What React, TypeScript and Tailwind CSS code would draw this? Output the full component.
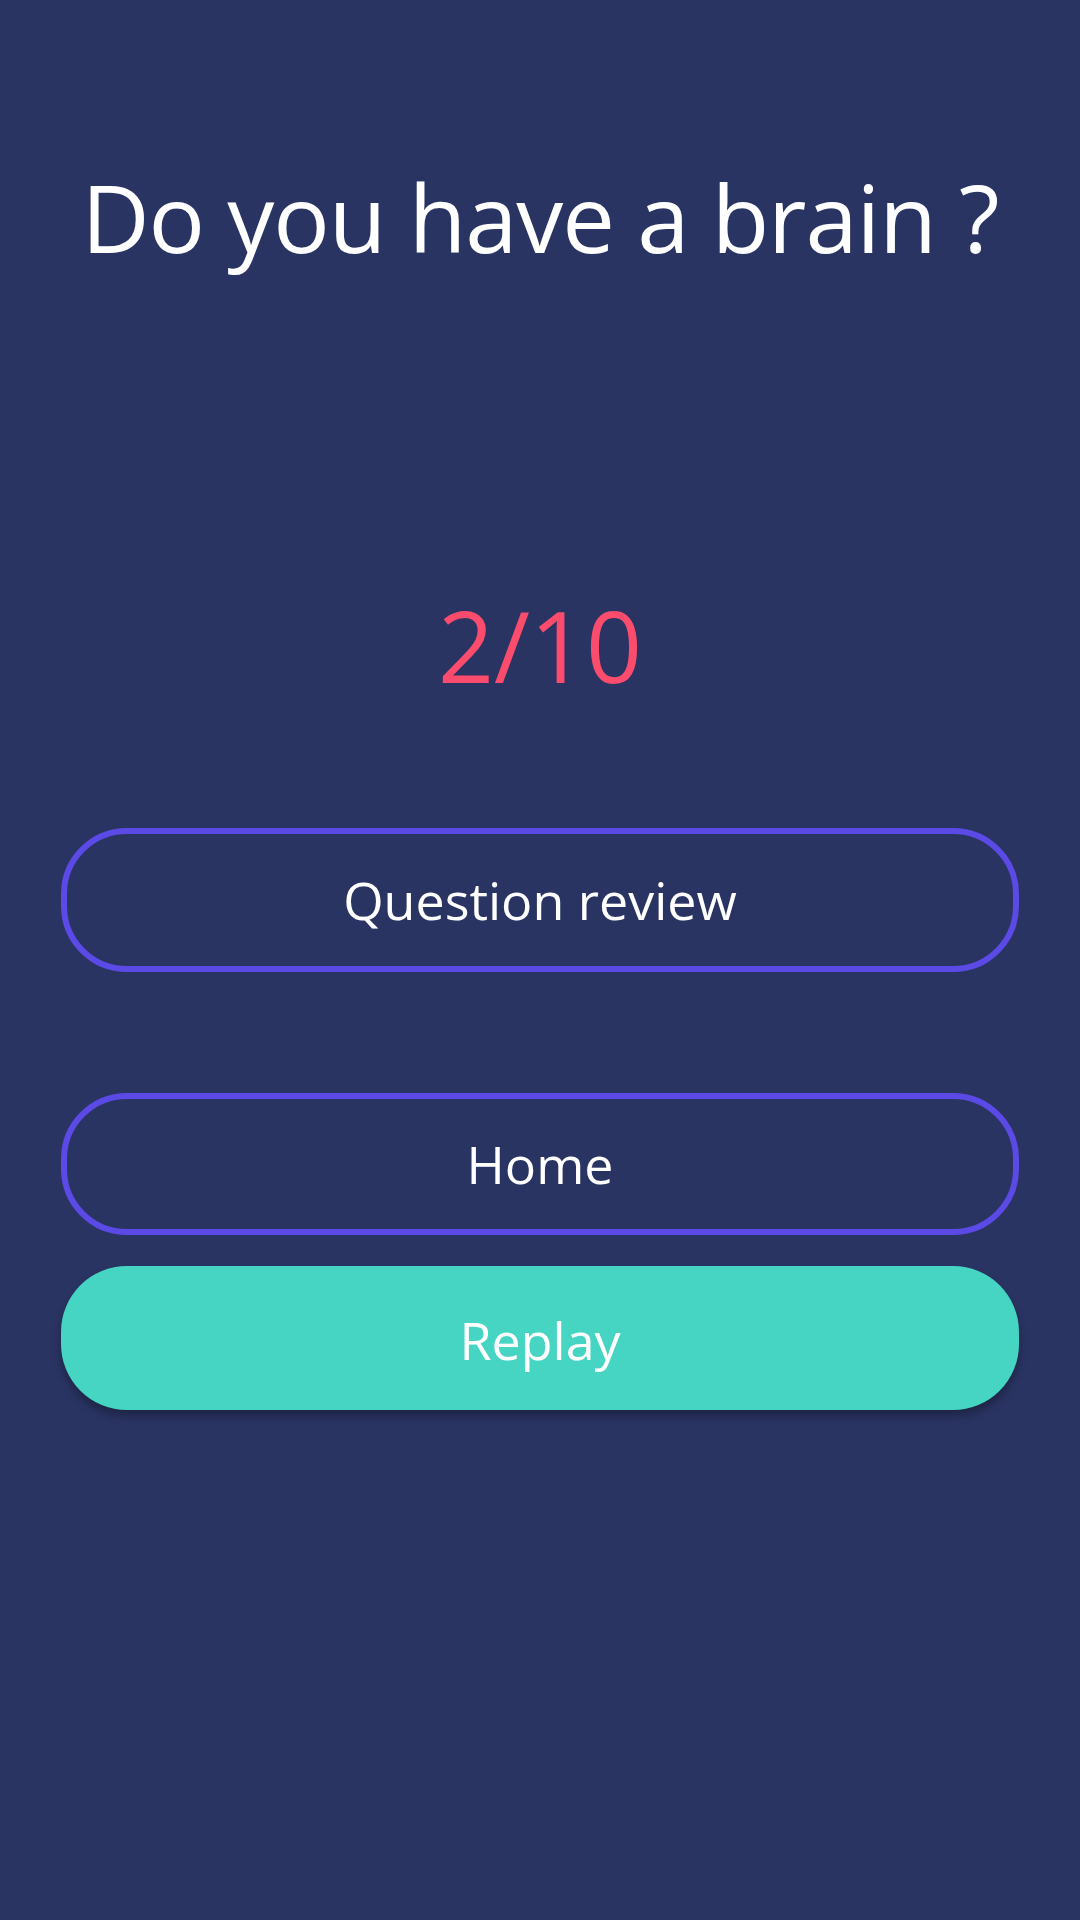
export default function App() {
  return (
    <div className="min-h-[1920px] w-full bg-[#2a3463] flex flex-col items-center px-[61px] font-['Open_Sans',sans-serif] text-white">
      <h1 className="mt-[170px] text-[94px] leading-none font-normal tracking-[-1.1px] whitespace-nowrap">Do you have a brain ?</h1>
      <div className="mt-[332px] text-[98px] leading-none text-[#fc4c6e]">2/10</div>
      <button className="mt-[134px] w-full h-[144px] rounded-[66px] border-[6px] border-[#5b4ae6] text-[52px] leading-none">
        Question review
      </button>
      <button className="mt-[121px] w-full h-[142px] rounded-[66px] border-[6px] border-[#5b4ae6] text-[52px] leading-none">
        Home
      </button>
      <button className="mt-[31px] w-full h-[144px] rounded-[66px] bg-[#47d5c3] text-[52px] leading-none pt-[4px] shadow-[0_6px_8px_rgba(0,0,0,0.3)]">
        Replay
      </button>
    </div>
  );
}
